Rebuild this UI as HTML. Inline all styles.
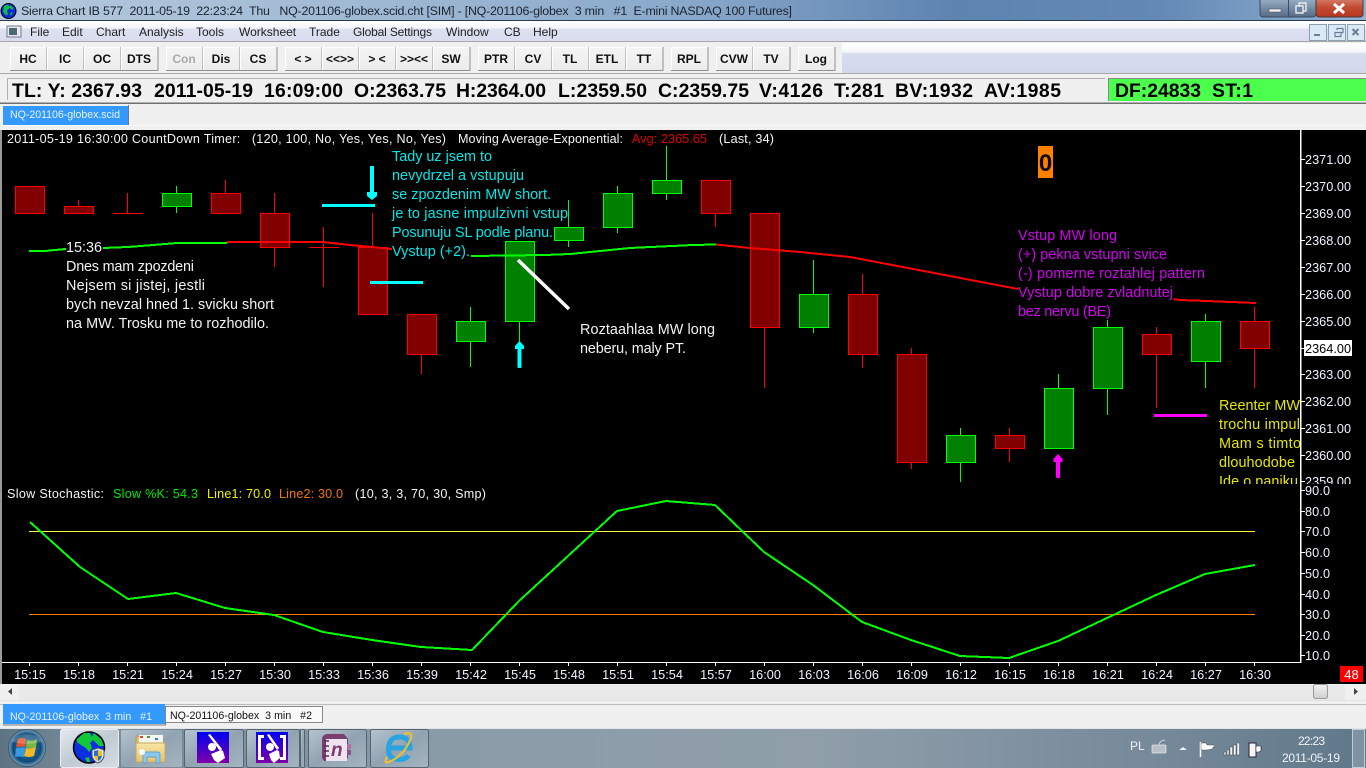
<!DOCTYPE html>
<html><head><meta charset="utf-8"><title>Sierra Chart</title>
<style>
html,body{margin:0;padding:0;background:#f0f0f0;width:1366px;height:768px;overflow:hidden}
svg{display:block;position:absolute;left:0;top:0}
text{font-family:"Liberation Sans",sans-serif;white-space:pre}
.t{font-size:12.4px;fill:#1c2430}
.m{font-size:12px;fill:#222}
.b{font-size:12px;font-weight:bold;fill:#111;text-anchor:middle}
.s{font-size:19.4px;font-weight:bold;fill:#000}
.h{font-size:12.6px;fill:#f4f4f4}
.n{font-size:14.4px}
.p{font-size:12.7px;fill:#f0f4ff}
.x{font-size:12.7px;fill:#f0f4ff;text-anchor:middle}
.cr{fill:#800000;stroke:#f00;stroke-width:1}
.cg{fill:#008000;stroke:#0f0;stroke-width:1}
</style></head><body>
<svg width="1366" height="768" viewBox="0 0 1366 768" xmlns="http://www.w3.org/2000/svg">
<defs>
<linearGradient id="title" x1="0" x2="1" y1="0" y2="0"><stop offset="0" stop-color="#b4c8dc"/><stop offset=".2" stop-color="#a5bdd6"/><stop offset=".5" stop-color="#8aa9cb"/><stop offset=".7" stop-color="#5d83b0"/><stop offset=".85" stop-color="#6389b4"/><stop offset="1" stop-color="#92b2d4"/></linearGradient>
<linearGradient id="bar1" x1="0" x2="0" y1="0" y2="1"><stop offset="0" stop-color="#fff"/><stop offset=".35" stop-color="#f4f6fb"/><stop offset=".4" stop-color="#dde1f1"/><stop offset="1" stop-color="#d8dcee"/></linearGradient>
<linearGradient id="bar2" x1="0" x2="0" y1="0" y2="1"><stop offset="0" stop-color="#fff"/><stop offset=".3" stop-color="#f6f7fb"/><stop offset=".35" stop-color="#d6dbed"/><stop offset="1" stop-color="#d2d8eb"/></linearGradient>
<linearGradient id="btn" x1="0" x2="0" y1="0" y2="1"><stop offset="0" stop-color="#f4f4f4"/><stop offset="1" stop-color="#ececec"/></linearGradient>
<linearGradient id="task" x1="0" x2="1" y1="0" y2="0"><stop offset="0" stop-color="#5e7483"/><stop offset=".05" stop-color="#748896"/><stop offset=".33" stop-color="#8b9ca9"/><stop offset=".6" stop-color="#8f9ea9"/><stop offset=".85" stop-color="#76899a"/><stop offset="1" stop-color="#5f7889"/></linearGradient>
<linearGradient id="tb" x1="0" x2="1" y1="0" y2="1"><stop offset="0" stop-color="#b5c3ce"/><stop offset=".5" stop-color="#91a3b1"/><stop offset="1" stop-color="#a5b5c1"/></linearGradient>
<linearGradient id="tb2" x1="0" x2="1" y1="0" y2="1"><stop offset="0" stop-color="#e4e9ee"/><stop offset=".5" stop-color="#c0cad3"/><stop offset="1" stop-color="#d6dde3"/></linearGradient>
<linearGradient id="pur" x1="0" x2="0" y1="0" y2="1"><stop offset="0" stop-color="#0000f0"/><stop offset="1" stop-color="#8000a8"/></linearGradient>
<linearGradient id="red" x1="0" x2="0" y1="0" y2="1"><stop offset="0" stop-color="#d8826e"/><stop offset=".5" stop-color="#c24a33"/><stop offset="1" stop-color="#b8351f"/></linearGradient>
<linearGradient id="glass" x1="0" x2="0" y1="0" y2="1"><stop offset="0" stop-color="#9cb2c8"/><stop offset="1" stop-color="#546c84"/></linearGradient>
<linearGradient id="thumb" x1="0" x2="0" y1="0" y2="1"><stop offset="0" stop-color="#f2f2f2"/><stop offset="1" stop-color="#cfcfcf"/></linearGradient>
<radialGradient id="orb" cx=".5" cy=".5" r=".5"><stop offset="0" stop-color="#2f80b8"/><stop offset=".75" stop-color="#0d4a78"/><stop offset="1" stop-color="#7fa6bf"/></radialGradient>
<linearGradient id="fold" x1="0" x2="0" y1="0" y2="1"><stop offset="0" stop-color="#f7e6a6"/><stop offset="1" stop-color="#e6c36c"/></linearGradient>
<clipPath id="cl1"><rect x="2" y="130" width="1298" height="354"/></clipPath>
<clipPath id="cl2"><rect x="1302" y="130" width="64" height="354"/></clipPath>
</defs>

<!-- title bar -->
<rect width="1366" height="21" fill="url(#title)"/>
<circle cx="8.500" cy="11" r="7.500" fill="#0a28d8" stroke="#000"/>
<path d="M4 6l4-1.500 2 3-3 3 1 4-2 1-3-4zM10 5l3.500 3-1 2-3-2zM10 13l3-1-2 4z" fill="#10c040"/>
<text class="t" x="21" y="15" textLength="771">Sierra Chart IB 577  2011-05-19  22:23:24  Thu   NQ-201106-globex.scid.cht [SIM] - [NQ-201106-globex  3 min   #1  E-mini NASDAQ 100 Futures]</text>
<rect x="1260" y="-2" width="56" height="19" rx="3" fill="url(#glass)" stroke="#3a4d63"/>
<line x1="1288.500" y1="0" x2="1288.500" y2="17" stroke="#3a4d63"/>
<rect x="1316" y="-2" width="47" height="19" rx="3" fill="url(#red)" stroke="#4a3a3a"/>
<rect x="1269" y="9" width="12" height="3" fill="#f0f0f0" stroke="#445" stroke-width=".5"/>
<rect x="1299" y="3" width="7" height="8" fill="none" stroke="#eee" stroke-width="1.400"/>
<rect x="1296" y="6" width="7" height="7" fill="#6a86a4" stroke="#eee" stroke-width="1.400"/>
<path d="M1334 4l10 9M1344 4l-10 9" stroke="#fff" stroke-width="3"/>
<rect y="20" width="1366" height="1.500" fill="#2c3a50"/>

<!-- menu bar -->
<rect y="21" width="1366" height="20" fill="url(#bar1)"/>
<rect y="41" width="1366" height="1" fill="#a8a8a8"/>
<rect x="7" y="26" width="14" height="11" fill="#e8e8f0" stroke="#778"/><rect x="9" y="28" width="8" height="7" fill="#4a6a70"/>
<text class="m" x="30" y="36">File</text><text class="m" x="62" y="36">Edit</text><text class="m" x="96" y="36">Chart</text><text class="m" x="139" y="36">Analysis</text><text class="m" x="196" y="36">Tools</text><text class="m" x="239" y="36">Worksheet</text><text class="m" x="309" y="36">Trade</text><text class="m" x="353" y="36" textLength="79">Global Settings</text><text class="m" x="446" y="36">Window</text><text class="m" x="504" y="36">CB</text><text class="m" x="533" y="36">Help</text>
<g fill="#dbe9f5" stroke="#8ba0b4"><rect x="1309.500" y="24.500" width="17" height="16"/><rect x="1328.500" y="24.500" width="17" height="16"/><rect x="1347.500" y="24.500" width="17" height="16"/></g>
<rect x="1314" y="34" width="6" height="2" fill="#6a7f95"/>
<path d="M1335 32.500h6v4h-6zM1337 30v-1.500h6v4h-2" fill="none" stroke="#6a7f95" stroke-width="1.200"/>
<path d="M1352.500 29l6 6M1358.500 29l-6 6" stroke="#6a7f95" stroke-width="2"/>

<!-- toolbar -->
<rect y="42" width="1366" height="31" fill="#f0f0f0"/>
<rect x="842" y="43" width="524" height="30" fill="url(#bar2)"/>
<rect y="73" width="1366" height="1.500" fill="#a8a8a8"/>
<g fill="url(#btn)" stroke="none">
<rect x="10" y="47" width="37" height="24"/><rect x="47" y="47" width="37" height="24"/><rect x="84" y="47" width="37" height="24"/><rect x="121" y="47" width="37" height="24"/>
<rect x="166" y="47" width="37" height="24"/><rect x="203" y="47" width="37" height="24"/><rect x="240" y="47" width="37" height="24"/>
<rect x="285" y="47" width="37" height="24"/><rect x="322" y="47" width="37" height="24"/><rect x="359" y="47" width="37" height="24"/><rect x="396" y="47" width="37" height="24"/><rect x="433" y="47" width="37" height="24"/>
<rect x="478" y="47" width="37" height="24"/><rect x="515" y="47" width="37" height="24"/><rect x="552" y="47" width="37" height="24"/><rect x="589" y="47" width="37" height="24"/><rect x="626" y="47" width="37" height="24"/>
<rect x="671" y="47" width="37" height="24"/><rect x="716" y="47" width="37" height="24"/><rect x="753" y="47" width="37" height="24"/><rect x="798" y="47" width="37" height="24"/>
</g>
<path fill="none" stroke="#909090" d="M10 70.500h37V47M47 70.500h37V47M84 70.500h37V47M121 70.500h37V47M166 70.500h37V47M203 70.500h37V47M240 70.500h37V47M285 70.500h37V47M322 70.500h37V47M359 70.500h37V47M396 70.500h37V47M433 70.500h37V47M478 70.500h37V47M515 70.500h37V47M552 70.500h37V47M589 70.500h37V47M626 70.500h37V47M671 70.500h37V47M716 70.500h37V47M753 70.500h37V47M798 70.500h37V47"/>
<path fill="none" stroke="#fff" d="M10.500 70V47.500H46M47.500 70V47.500H83M84.500 70V47.500H120M121.500 70V47.500H157M166.500 70V47.500H202M203.500 70V47.500H239M240.500 70V47.500H276M285.500 70V47.500H321M322.500 70V47.500H358M359.500 70V47.500H395M396.500 70V47.500H432M433.500 70V47.500H469M478.500 70V47.500H514M515.500 70V47.500H551M552.500 70V47.500H588M589.500 70V47.500H625M626.500 70V47.500H662M671.500 70V47.500H707M716.500 70V47.500H752M753.500 70V47.500H789M798.500 70V47.500H834"/>
<text class="b" x="28" y="63">HC</text><text class="b" x="65" y="63">IC</text><text class="b" x="102" y="63">OC</text><text class="b" x="139" y="63">DTS</text>
<text class="b" x="184" y="63" style="fill:#a8a8a8">Con</text><text class="b" x="221" y="63">Dis</text><text class="b" x="258" y="63">CS</text>
<text class="b" x="303" y="63">&lt; &gt;</text><text class="b" x="340" y="63">&lt;&lt;&gt;&gt;</text><text class="b" x="377" y="63">&gt; &lt;</text><text class="b" x="414" y="63">&gt;&gt;&lt;&lt;</text><text class="b" x="451" y="63">SW</text>
<text class="b" x="496" y="63">PTR</text><text class="b" x="533" y="63">CV</text><text class="b" x="570" y="63">TL</text><text class="b" x="607" y="63">ETL</text><text class="b" x="644" y="63">TT</text>
<text class="b" x="689" y="63">RPL</text><text class="b" x="734" y="63">CVW</text><text class="b" x="771" y="63">TV</text><text class="b" x="816" y="63">Log</text>

<!-- status -->
<rect x="0" y="74" width="1366" height="29" fill="#f0f0f0"/>
<path d="M7.500 100V78.500H1105" fill="none" stroke="#b0b0b0"/>
<rect x="1108" y="78" width="258" height="23" fill="#4dff4d"/>
<path d="M1108.500 101V78.500H1366" fill="none" stroke="#8a8a8a"/>
<rect y="102.500" width="1366" height="1.500" fill="#707070"/>
<text class="s" x="12" y="97" textLength="130">TL: Y: 2367.93</text>
<text class="s" x="154" y="97" textLength="99">2011-05-19</text>
<text class="s" x="264" y="97" textLength="79">16:09:00</text>
<text class="s" x="354" y="97" textLength="92">O:2363.75</text>
<text class="s" x="456" y="97" textLength="90">H:2364.00</text>
<text class="s" x="558" y="97" textLength="89">L:2359.50</text>
<text class="s" x="658" y="97" textLength="91">C:2359.75</text>
<text class="s" x="759" y="97" textLength="64">V:4126</text>
<text class="s" x="834" y="97" textLength="50">T:281</text>
<text class="s" x="895" y="97" textLength="78">BV:1932</text>
<text class="s" x="984" y="97" textLength="77">AV:1985</text>
<text class="s" x="1115" y="97" textLength="86">DF:24833</text>
<text class="s" x="1212" y="97" textLength="41">ST:1</text>

<!-- tab row -->
<rect x="3" y="106" width="125" height="19" fill="#3399ff"/>
<path d="M128.500 105V125" stroke="#777"/>
<rect y="125" width="1366" height="1" fill="#fbfbfb"/>
<text x="10" y="118" style="font-size:10.600px;fill:#e6f2ff" textLength="110">NQ-201106-globex.scid</text>

<!-- chart -->
<rect x="0" y="127" width="2" height="557" fill="#9a9a9a"/>
<rect x="2" y="130" width="1364" height="554" fill="#000"/>
<rect y="127" x="0" width="1366" height="3" fill="#f0f0f0"/>

<g shape-rendering="crispEdges" clip-path="url(#cl1)">
<path fill="none" stroke="#f00" d="M78.500 200v6M127.500 193v20M113 213.500h30M225.500 180v13M274.500 193v20M274.500 248v19M323.500 227v60M309 247.500h30M372.500 213v34M421.500 354v20M715.500 213v14M764.500 327v61M862.500 274v20M862.500 354v14M911.500 348v6M911.500 462v7M1009.500 428v7M1009.500 449v13M1156.500 327v7M1156.500 354v54M1254.500 307v14M1254.500 348v40"/>
<path fill="none" stroke="#0f0" d="M176.500 186v7M176.500 206v7M470.500 307v14M470.500 341v26M519.500 321v24M568.500 200v27M568.500 240v7M617.500 186v7M617.500 227v6M666.500 146v34M666.500 193v7M813.500 260v34M813.500 327v6M960.500 428v7M960.500 462v20M1058.500 374v14M1107.500 320v7M1107.500 388v27M1205.500 314v7M1205.500 361v27"/>
<rect class="cr" x="15.500" y="186.500" width="29" height="27"/>
<rect class="cr" x="64.500" y="206.500" width="29" height="7"/>
<rect class="cg" x="162.500" y="193.500" width="29" height="13"/>
<rect class="cr" x="211.500" y="193.500" width="29" height="20"/>
<rect class="cr" x="260.500" y="213.500" width="29" height="34"/>
<rect class="cr" x="358.500" y="247.500" width="29" height="67"/>
<rect class="cr" x="407.500" y="314.500" width="29" height="40"/>
<rect class="cg" x="456.500" y="321.500" width="29" height="20"/>
<rect class="cg" x="505.500" y="241.500" width="29" height="80"/>
<rect class="cg" x="554.500" y="227.500" width="29" height="13"/>
<rect class="cg" x="603.500" y="193.500" width="29" height="34"/>
<rect class="cg" x="652.500" y="180.500" width="29" height="13"/>
<rect class="cr" x="701.500" y="180.500" width="29" height="33"/>
<rect class="cr" x="750.500" y="213.500" width="29" height="114"/>
<rect class="cg" x="799.500" y="294.500" width="29" height="33"/>
<rect class="cr" x="848.500" y="294.500" width="29" height="60"/>
<rect class="cr" x="897.500" y="354.500" width="29" height="108"/>
<rect class="cg" x="946.500" y="435.500" width="29" height="27"/>
<rect class="cr" x="995.500" y="435.500" width="29" height="13"/>
<rect class="cg" x="1044.500" y="388.500" width="29" height="60"/>
<rect class="cg" x="1093.500" y="327.500" width="29" height="61"/>
<rect class="cr" x="1142.500" y="334.500" width="29" height="20"/>
<rect class="cg" x="1191.500" y="321.500" width="29" height="40"/>
<rect class="cr" x="1240.500" y="321.500" width="29" height="27"/>
<!-- MA -->
<polyline fill="none" stroke="#0f0" stroke-width="2" points="29,251 45,251 55,250 66,249 103,248 128,247 153,245 177,243 227,243"/>
<polyline fill="none" stroke="#f00" stroke-width="2" points="227,242 323,242 350,245 372,247 392,249"/>
<polyline fill="none" stroke="#0f0" stroke-width="2" points="471,256 545,255 570,254 630,248 693,245 716,244.500"/>
<polyline fill="none" stroke="#f00" stroke-width="2" points="716,244.500 750,248 800,252 850,257 900,266.500 1018,289"/>
<polyline fill="none" stroke="#f00" stroke-width="2" points="1173,299 1180,300 1207,301 1231,302 1256,303"/>
<!-- note backgrounds -->
<g fill="#000">
<rect x="66" y="240" width="37" height="16"/>
<rect x="392" y="244" width="79" height="16"/>
<rect x="1018" y="284" width="156" height="17"/>
</g>
</g>
<g clip-path="url(#cl1)">
<g fill="#f2f2f2">
<text class="n" x="66" y="252" textLength="36">15:36</text>
<text class="n" x="66" y="271" textLength="128">Dnes mam zpozdeni</text>
<text class="n" x="66" y="290" textLength="139">Nejsem si jistej, jestli</text>
<text class="n" x="66" y="309" textLength="208">bych nevzal hned 1. svicku short</text>
<text class="n" x="66" y="328" textLength="203">na MW. Trosku me to rozhodilo.</text>
<text class="n" x="580" y="334" textLength="135">Roztaahlaa MW long</text>
<text class="n" x="580" y="353" textLength="106">neberu, maly PT.</text>
</g>
<g fill="#00e8e8">
<text class="n" x="392" y="161" textLength="100">Tady uz jsem to</text>
<text class="n" x="392" y="180" textLength="132">nevydrzel a vstupuju</text>
<text class="n" x="392" y="199" textLength="159">se zpozdenim MW short.</text>
<text class="n" x="392" y="218" textLength="176">je to jasne impulzivni vstup</text>
<text class="n" x="392" y="237" textLength="161">Posunuju SL podle planu.</text>
<text class="n" x="392" y="256" textLength="78">Vystup (+2).</text>
</g>
<g fill="#d400f0">
<text class="n" x="1018" y="240" textLength="99">Vstup MW long</text>
<text class="n" x="1018" y="259" textLength="149">(+) pekna vstupni svice</text>
<text class="n" x="1018" y="278" textLength="187">(-) pomerne roztahlej pattern</text>
<text class="n" x="1018" y="297" textLength="155">Vystup dobre zvladnutej</text>
<text class="n" x="1018" y="316" textLength="93">bez nervu (BE)</text>
</g>
<g fill="#e6e600">
<text class="n" x="1219" y="410" textLength="81">Reenter MW</text>
<text class="n" x="1219" y="429" textLength="81">trochu impul</text>
<text class="n" x="1219" y="448" textLength="82">Mam s timto</text>
<text class="n" x="1219" y="467" textLength="76">dlouhodobe</text>
<text class="n" x="1219" y="486" textLength="79">Ide o paniku</text>
</g>
</g>

<!-- annotations -->
<g shape-rendering="crispEdges">
<rect x="322" y="204" width="53" height="3" fill="#0ff"/>
<rect x="370" y="281" width="53" height="3" fill="#0ff"/>
<rect x="370" y="166" width="4" height="30" fill="#0ff"/>
<rect x="1154" y="414" width="53" height="3" fill="#f0f"/>
</g>
<path d="M367 192h10v4l-5 4-5-4z" fill="#0ff"/>
<rect x="517.500" y="345" width="4" height="23" fill="#0ff" rx="1"/>
<path d="M515 349v-3l4.500-5 4.500 5v3z" fill="#0ff"/>
<line x1="518" y1="260" x2="569" y2="309" stroke="#fff" stroke-width="3.500"/>
<rect x="1056" y="458" width="4" height="20" fill="#f0f" rx="1"/>
<path d="M1053.500 462v-3l4.500-5 4.500 5v3z" fill="#f0f"/>

<rect x="1038" y="146" width="15" height="32" fill="#ff8000"/>
<text x="1045.500" y="171" text-anchor="middle" style="font-size:24px;font-weight:bold;fill:#0c0c0c">0</text>

<!-- chart header -->
<text class="h" x="7" y="143" textLength="439">2011-05-19 16:30:00 CountDown Timer:   (120, 100, No, Yes, Yes, No, Yes)</text>
<text class="h" x="458" y="143" textLength="165">Moving Average-Exponential:</text>
<text class="h" x="632" y="143" textLength="75" style="fill:#e00000">Avg: 2365.65</text>
<text class="h" x="719" y="143" textLength="55">(Last, 34)</text>

<text class="h" x="7" y="498" textLength="97">Slow Stochastic:</text>
<text class="h" x="113" y="498" textLength="85" style="fill:#00e800">Slow %K: 54.3</text>
<text class="h" x="207" y="498" textLength="64" style="fill:#f0f000">Line1: 70.0</text>
<text class="h" x="279" y="498" textLength="64" style="fill:#f07800">Line2: 30.0</text>
<text class="h" x="355" y="498" textLength="131">(10, 3, 3, 70, 30, Smp)</text>

<!-- stochastic -->
<g shape-rendering="crispEdges">
<rect x="29" y="531" width="1226" height="1" fill="#ffff40"/>
<rect x="29" y="614" width="1226" height="1" fill="#ff8000"/>
<polyline fill="none" stroke="#0f0" stroke-width="2" points="30,522 80,567 128,599 176,593 225,608 274,615 323,632 372,640 421,647 472,650 519,601 568,556 617,511 666,501 715,505 764,552 813,585 862,622 911,640 960,656 1009,658 1058,641 1107,618 1156,595 1205,574 1255,565"/>
<!-- scale lines -->
<rect x="1300" y="130" width="1.500" height="533" fill="#fff"/>
<rect x="2" y="662" width="1299" height="1" fill="#fff"/>
<path fill="none" stroke="#fff" d="M1301 159.500h4M1301 186.500h4M1301 213.500h4M1301 240.500h4M1301 267.500h4M1301 294.500h4M1301 321.500h4M1301 348.500h4M1301 374.500h4M1301 401.500h4M1301 428.500h4M1301 455.500h4M1301 481.500h4M1301 490.500h4M1301 511.500h4M1301 531.500h4M1301 552.500h4M1301 573.500h4M1301 594.500h4M1301 614.500h4M1301 635.500h4M1301 655.500h4"/>
<path fill="none" stroke="#fff" d="M29.500 663v3M78.500 663v3M127.500 663v3M176.500 663v3M225.500 663v3M274.500 663v3M323.500 663v3M372.500 663v3M421.500 663v3M470.500 663v3M519.500 663v3M568.500 663v3M617.500 663v3M666.500 663v3M715.500 663v3M764.500 663v3M813.500 663v3M862.500 663v3M911.500 663v3M960.500 663v3M1009.500 663v3M1058.500 663v3M1107.500 663v3M1156.500 663v3M1205.500 663v3M1254.500 663v3"/>
</g>
<rect x="1304" y="340" width="48" height="16" fill="#fff"/>
<g clip-path="url(#cl2)">
<text class="p" x="1305" y="164" textLength="46">2371.00</text>
<text class="p" x="1305" y="191" textLength="46">2370.00</text>
<text class="p" x="1305" y="218" textLength="46">2369.00</text>
<text class="p" x="1305" y="245" textLength="46">2368.00</text>
<text class="p" x="1305" y="272" textLength="46">2367.00</text>
<text class="p" x="1305" y="299" textLength="46">2366.00</text>
<text class="p" x="1305" y="326" textLength="46">2365.00</text>
<text class="p" x="1305" y="353" textLength="46" style="fill:#000">2364.00</text>
<text class="p" x="1305" y="379" textLength="46">2363.00</text>
<text class="p" x="1305" y="406" textLength="46">2362.00</text>
<text class="p" x="1305" y="433" textLength="46">2361.00</text>
<text class="p" x="1305" y="460" textLength="46">2360.00</text>
<text class="p" x="1305" y="486" textLength="46">2359.00</text>
</g>
<text class="p" x="1305" y="495" textLength="25">90.0</text>
<text class="p" x="1305" y="516" textLength="25">80.0</text>
<text class="p" x="1305" y="536" textLength="25">70.0</text>
<text class="p" x="1305" y="557" textLength="25">60.0</text>
<text class="p" x="1305" y="578" textLength="25">50.0</text>
<text class="p" x="1305" y="599" textLength="25">40.0</text>
<text class="p" x="1305" y="619" textLength="25">30.0</text>
<text class="p" x="1305" y="640" textLength="25">20.0</text>
<text class="p" x="1305" y="660" textLength="25">10.0</text>

<g>
<text class="x" x="30" y="679">15:15</text><text class="x" x="79" y="679">15:18</text><text class="x" x="128" y="679">15:21</text><text class="x" x="177" y="679">15:24</text><text class="x" x="226" y="679">15:27</text><text class="x" x="275" y="679">15:30</text><text class="x" x="324" y="679">15:33</text><text class="x" x="373" y="679">15:36</text><text class="x" x="422" y="679">15:39</text><text class="x" x="471" y="679">15:42</text><text class="x" x="520" y="679">15:45</text><text class="x" x="569" y="679">15:48</text><text class="x" x="618" y="679">15:51</text><text class="x" x="667" y="679">15:54</text><text class="x" x="716" y="679">15:57</text><text class="x" x="765" y="679">16:00</text><text class="x" x="814" y="679">16:03</text><text class="x" x="863" y="679">16:06</text><text class="x" x="912" y="679">16:09</text><text class="x" x="961" y="679">16:12</text><text class="x" x="1010" y="679">16:15</text><text class="x" x="1059" y="679">16:18</text><text class="x" x="1108" y="679">16:21</text><text class="x" x="1157" y="679">16:24</text><text class="x" x="1206" y="679">16:27</text><text class="x" x="1255" y="679">16:30</text>
</g>
<rect x="1340" y="666" width="23" height="16" fill="#f00"/>
<text x="1351.500" y="679" text-anchor="middle" style="font-size:13px;fill:#fff">48</text>

<!-- scrollbar -->
<rect y="684" width="1366" height="20" fill="#f0f0f0"/>
<rect x="19" y="685" width="1326" height="16" fill="#e9e9e9"/>
<rect y="700" width="1366" height="1" fill="#e0e0e0"/>
<rect x="1313.500" y="684.500" width="14" height="14" rx="2" fill="url(#thumb)" stroke="#9a9a9a"/>
<path d="M12 688v7l-4-3.500z" fill="#444"/><path d="M1354 688v7l4-3.500z" fill="#444"/>
<rect y="704.500" width="1366" height="1" fill="#888"/>

<!-- bottom tabs -->
<rect y="705" width="1366" height="22" fill="#f0f0f0"/>
<rect x="3" y="704" width="162" height="20" fill="#3399ff"/>
<path d="M165.500 706v19H3" fill="none" stroke="#777"/>
<rect x="165" y="706" width="158" height="16" fill="#fafafa"/>
<path d="M165.500 706.500h157v16h-157z" fill="none" stroke="#888"/>
<text x="10" y="720" style="font-size:10.600px;fill:#e6f2ff" textLength="142">NQ-201106-globex  3 min   #1</text>
<text x="170" y="719" style="font-size:10.600px;fill:#111" textLength="142">NQ-201106-globex  3 min   #2</text>

<!-- taskbar -->
<rect y="727" width="1366" height="41" fill="#f0f0f0"/>
<rect y="728" width="1366" height="40" fill="url(#task)"/>
<rect y="728" width="1366" height="1" fill="#dfe5ea"/>
<circle cx="27" cy="748" r="18.500" fill="url(#orb)" stroke="#3a5a70"/>
<path d="M18 739q4-2 8 0l-1 8q-4-1-9 0z" fill="#e8502c"/><path d="M27 740q5 2 10-1l-1 8q-5 2-10 0z" fill="#7ab83a"/>
<path d="M16 748q5-1 9 0l-1 9q-4-1-9 0z" fill="#3a9ae0"/><path d="M26 748q5 1 10-1l-2 9q-5 2-10 0z" fill="#f0b828"/>
<path d="M11 741q16-14 32 0q-16 6-32 0z" fill="#fff" opacity=".2"/>

<g stroke="#55646f">
<rect x="60.500" y="729.500" width="58" height="38" rx="2" fill="url(#tb2)" stroke="#e8ecef"/>
<rect x="120.500" y="729.500" width="62" height="38" rx="2" fill="url(#tb)" stroke-opacity=".35"/>
<rect x="184.500" y="729.500" width="59" height="38" rx="2" fill="url(#tb)"/>
<rect x="246.500" y="729.500" width="53" height="38" rx="2" fill="url(#tb)"/>
<rect x="300.500" y="729.500" width="4" height="38" rx="1" fill="url(#tb)"/>
<rect x="308.500" y="729.500" width="58" height="38" rx="2" fill="url(#tb)"/>
<rect x="370.500" y="729.500" width="58" height="38" rx="2" fill="url(#tb)"/>
</g>
<!-- globe -->
<circle cx="89" cy="747.500" r="15.500" fill="#0a2ee0" stroke="#000" stroke-width="1.500"/>
<path d="M77 739l7-6 6 0 3 7-3 3 2 5-3 4-3-4-5-3-4-3zM94 733l7 6 3 7-5 0-4-4-4-4zM85 758l4-1 1 5-3 0z" fill="#10c838"/>
<path d="M92 750l6-2 6 2v6q-1 5-6 7-5-2-6-7z" fill="#dde6ee" stroke="#556"/>
<path d="M98 750v6h-4q0-2 0-5zM98 756h4q-1 4-4 5z" fill="#2a6fd0"/><path d="M98 750l4 1.500v4.500h-4zM98 756v5q-3-1-4-5z" fill="#f0c020"/>
<!-- folder -->
<path d="M136 736h12l3 3h12v8h-27z" fill="#d8c070" stroke="#b09a50"/>
<rect x="139" y="735" width="24" height="10" fill="#f6f6f0"/>
<rect x="140" y="736" width="3" height="2" fill="#e04030"/><rect x="147" y="736" width="3" height="2" fill="#40a040"/><rect x="155" y="738" width="3" height="2" fill="#3080d0"/>
<path d="M136 743h29l0 19h-29z" fill="url(#fold)" stroke="#c8a860"/>
<path d="M143 763v-9q0-2 3-2h11q3 0 3 2v9h-4v-6h-9v6z" fill="#8cc8ec" stroke="#6aa0c8"/>
<circle cx="142" cy="752" r="3" fill="#fff"/>
<!-- app 1 -->
<rect x="197" y="732" width="32" height="31" fill="url(#pur)"/>
<path d="M208 735l2-1 12 15-2 2z" fill="#fff"/><circle cx="212" cy="747" r="4" fill="#fff"/>
<path d="M211 754l10-4 2 1 2 7-7 5-4-3z" fill="#fff"/>
<!-- app 2 -->
<rect x="256" y="732" width="32" height="31" fill="url(#pur)"/>
<path d="M264 735h-6v25h6v-3h-3v-19h3zM280 735h6v25h-6v-3h3v-19h-3z" fill="#fff"/>
<path d="M267 735l2-1 10 14-2 2z" fill="#fff"/><circle cx="270" cy="747" r="4" fill="#fff"/>
<path d="M269 754l8-4 2 1 1 7-6 5-3-3z" fill="#fff"/>
<!-- onenote -->
<path d="M322 740q0-6 6-6h16l4 5v19l-4 3h-20l-2-3z" fill="#7a3d72"/>
<rect x="326" y="739" width="21" height="22" fill="#eee4ee"/>
<path d="M324 741h5M324 746h5M324 751h5M324 756h5" stroke="#5a2a58" stroke-width="1.500"/>
<rect x="347" y="744" width="4" height="5" fill="#b070a8"/><rect x="347" y="750" width="4" height="5" fill="#8a5088"/>
<text x="331" y="756" style="font-size:19px;font-style:italic;font-weight:bold;fill:#7a3d72">n</text>
<!-- IE -->
<path d="M389 748h21q0-11-10.500-11t-11 11.500 11 11q6 0 9-4" fill="none" stroke="#2aa4e0" stroke-width="5"/>
<path d="M387 757q-4 7 2 5 15-6 22-24 2-7-7-4" fill="none" stroke="#f0c030" stroke-width="2"/>
<!-- tray -->
<text x="1130" y="750" style="font-size:12px;fill:#eef2f5">PL</text>
<rect x="1152" y="745" width="14" height="8" rx="1" fill="#b8c0c6" stroke="#e4e8ea" stroke-width=".7"/>
<path d="M1159 745q0-4 6-5" fill="none" stroke="#c8d0d4"/>
<path d="M1179 750l4-3 4 3z" fill="#f0f3f5"/>
<path d="M1200.500 742v15" stroke="#fff" stroke-width="1.500"/><path d="M1201 743h5l1 2h8l-3 4-5 1h-6z" fill="#fff" stroke="#333" stroke-width=".4"/>
<path d="M1224 752h2v3h-2zM1227 750h2v5h-2zM1230 747h2.500v8h-2.500zM1233.500 745h2.500v10h-2.500zM1237 743h2.500v12h-2.500z" fill="#f0f3f5" stroke="#334" stroke-width=".4"/>
<path d="M1249 743h7v14h-7z" fill="#f4f4f4" stroke="#223"/><path d="M1256 746h5v4q0 2-3 2h-2zM1261 748h1" fill="#fff" stroke="#223" stroke-width=".6"/>
<text x="1311.500" y="745" text-anchor="middle" textLength="27" style="font-size:12px;fill:#f0f3f5">22:23</text>
<text x="1311" y="762" text-anchor="middle" textLength="58" style="font-size:12px;fill:#f0f3f5">2011-05-19</text>
<rect x="1352.500" y="729.500" width="12" height="38" fill="#a3b4c0" fill-opacity=".45" stroke="#c0ccd4"/>
</svg>
</body></html>
